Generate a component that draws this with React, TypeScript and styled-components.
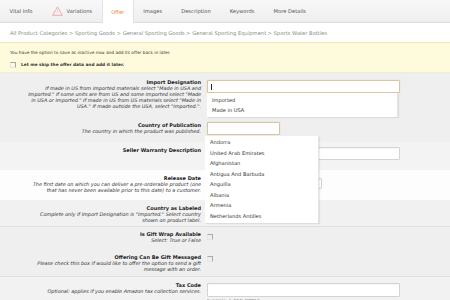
import React from 'react';
import styled, { createGlobalStyle } from 'styled-components';

const GlobalStyle = createGlobalStyle`
  html, body {
    margin: 0;
    padding: 0;
    overflow: hidden;
    background: #efefef;
    font-family: "DejaVu Sans", Verdana, sans-serif;
    color: #333;
  }
`;

const Page = styled.div`
  width: 450px;
  display: flex;
  flex-direction: column;
`;

const TabBar = styled.nav`
  height: 22px;
  display: flex;
  align-items: stretch;
  background: linear-gradient(#f8f8f8, #eeeeee);
  border-bottom: 1px solid #dcdcdc;
`;

const Tab = styled.div<{ $active?: boolean }>`
  display: flex;
  align-items: center;
  gap: 4px;
  padding: 0 8.5px;
  font-size: 5.2px;
  color: ${(p) => (p.$active ? '#e5832f' : '#555')};
  background: ${(p) => (p.$active ? '#fff' : 'transparent')};
  border-left: 1px solid ${(p) => (p.$active ? '#e2e2e2' : 'transparent')};
  border-right: 1px solid ${(p) => (p.$active ? '#e2e2e2' : 'transparent')};
  margin-bottom: ${(p) => (p.$active ? '-1px' : '0')};
  white-space: nowrap;
`;

const Breadcrumb = styled.div`
  background: #fff;
  padding: 7px 10px 6px;
  line-height: 6px;
  font-size: 5.2px;
  color: #8a8a8a;
  white-space: nowrap;
`;

const Notice = styled.div`
  background: #fefbdc;
  border-top: 1px solid #efe6b8;
  border-bottom: 1px solid #f3edcc;
  padding: 7px 10px 4px;
  font-size: 4.3px;
  line-height: 6px;
  color: #333;
`;

const SkipLine = styled.label`
  display: flex;
  align-items: center;
  gap: 5px;
  margin-top: 6px;
  font-weight: bold;
`;

const TinyCheck = styled.span`
  width: 4px;
  height: 4px;
  border-top: 1px solid #a8a8a8;
  border-right: 1px solid #a8a8a8;
  border-left: 1px solid #e6e6e6;
  border-bottom: 1px solid #e6e6e6;
  border-radius: 1px;
  flex: none;
`;

const Form = styled.section`
  display: flex;
  flex-direction: column;
`;

const Row = styled.div<{ $bg: string; $pt: number; $pb: number; $line?: boolean }>`
  display: grid;
  grid-template-columns: 201px 1fr;
  column-gap: 6px;
  align-items: start;
  background: ${(p) => p.$bg};
  padding: ${(p) => `${p.$pt}px 0 ${p.$pb}px`};
  border-top: ${(p) => (p.$line ? '1px solid #e0e0e0' : 'none')};
`;

const LabelCol = styled.div`
  text-align: right;
  padding-left: 12px;
`;

const FieldLabel = styled.div`
  font-size: 5px;
  line-height: 6.5px;
  font-weight: bold;
  color: #222;
  white-space: nowrap;
`;

const FieldHint = styled.div`
  margin-top: 0.5px;
  font-size: 4.9px;
  line-height: 5.5px;
  font-style: italic;
  color: #333;
  white-space: nowrap;
`;

const ControlCol = styled.div<{ $top?: number }>`
  position: relative;
  margin-top: ${(p) => p.$top ?? 0}px;
  display: flex;
  flex-direction: column;
`;

const TextBox = styled.div<{ $w: number; $h?: number; $focus?: boolean }>`
  box-sizing: border-box;
  width: ${(p) => p.$w}px;
  height: ${(p) => p.$h ?? 13}px;
  background: #fff;
  border: 1px solid ${(p) => (p.$focus ? '#d8c6a2' : '#d4d4d4')};
  border-radius: 1px;
  box-shadow: ${(p) => (p.$focus ? '0 0 1px rgba(214, 170, 100, 0.5)' : 'inset 0 1px 1px rgba(0,0,0,0.04)')};
  display: flex;
  align-items: center;
  padding-left: 3px;
`;

const Caret = styled.span`
  width: 0.6px;
  height: 6px;
  background: #222;
`;

const Suggest = styled.ul<{ $w: number; $top: number; $left: number }>`
  position: absolute;
  z-index: 2;
  top: ${(p) => p.$top}px;
  left: ${(p) => p.$left}px;
  width: ${(p) => p.$w}px;
  margin: 0;
  padding: 1.75px 0 1.5px;
  list-style: none;
  background: #fff;
  box-shadow: 1px 1px 1px rgba(0, 0, 0, 0.08);
  border-right: 1px solid #e4e4e4;
`;

const SuggestItem = styled.li`
  padding-left: 5px;
  font-size: 5.1px;
  line-height: 10.5px;
  color: #333;
  white-space: nowrap;
`;

const Check = styled(TinyCheck)<{ $top: number }>`
  margin-top: ${(p) => p.$top}px;
  width: 3.5px;
  height: 4.5px;
`;

const Example = styled.div`
  margin-top: 1px;
  font-size: 4.3px;
  line-height: 5px;
  color: #777;
`;

function WarnIcon() {
  return (
    <svg width="11" height="10" viewBox="0 0 11 10">
      <path d="M5.5 0.8 L10.4 9.3 L0.6 9.3 Z" fill="none" stroke="#ec9a9a" strokeWidth="0.8" strokeLinejoin="round" />
      <path d="M5.5 3.6 L5.5 6.6" stroke="#f1b5b5" strokeWidth="0.6" />
    </svg>
  );
}

function Field({ label, hint }: { label: string; hint?: string[] }) {
  return (
    <LabelCol>
      <FieldLabel>{label}</FieldLabel>
      {hint && hint.map((line, i) => <FieldHint key={i}>{line}</FieldHint>)}
    </LabelCol>
  );
}

const tabs = ['Vital Info', 'Variations', 'Offer', 'Images', 'Description', 'Keywords', 'More Details'];

const countries = [
  'Andorra',
  'United Arab Emirates',
  'Afghanistan',
  'Antigua And Barbuda',
  'Anguilla',
  'Albania',
  'Armenia',
  'Netherlands Antilles',
];

export default function App() {
  return (
    <Page>
      <GlobalStyle />
      <TabBar>
        {tabs.map((t) => (
          <Tab key={t} $active={t === 'Offer'}>
            {t === 'Variations' && <WarnIcon />}
            {t}
          </Tab>
        ))}
      </TabBar>

      <Breadcrumb>
        All Product Categories &gt; Sporting Goods &gt; General Sporting Goods &gt; General Sporting Equipment &gt; Sports Water Bottles
      </Breadcrumb>

      <Notice>
        <div>You have the option to save as inactive now and add its offer back in later.</div>
        <SkipLine>
          <TinyCheck />
          Let me skip the offer data and add it later.
        </SkipLine>
      </Notice>

      <Form>
        <Row $bg="#efefef" $pt={6} $pb={7}>
          <Field
            label="Import Designation"
            hint={[
              'If made in US from imported materials select "Made in USA and',
              'Imported." If some units are from US and some imported select "Made',
              'in USA or Imported." If made in US from US materials select "Made in',
              'USA." If made outside the USA, select "Imported.".',
            ]}
          />
          <ControlCol $top={1}>
            <TextBox $w={193} $focus>
              <Caret />
            </TextBox>
            <Suggest $w={190} $top={13} $left={0}>
              <SuggestItem>Imported</SuggestItem>
              <SuggestItem>Made in USA</SuggestItem>
            </Suggest>
          </ControlCol>
        </Row>

        <Row $bg="#efefef" $pt={5} $pb={7}>
          <Field label="Country of Publication" hint={['The country in which the product was published.']} />
          <ControlCol>
            <TextBox $w={73} $focus />
            <Suggest $w={113} $top={14} $left={-2}>
              {countries.map((c) => (
                <SuggestItem key={c}>{c}</SuggestItem>
              ))}
            </Suggest>
          </ControlCol>
        </Row>

        <Row $bg="#f3f3f3" $pt={5} $pb={10}>
          <Field label="Seller Warranty Description" />
          <ControlCol>
            <TextBox $w={193} />
          </ControlCol>
        </Row>

        <Row $bg="#fdfdfd" $pt={5} $pb={7}>
          <Field
            label="Release Date"
            hint={[
              'The first date on which you can deliver a pre-orderable product (one',
              'that has never been available prior to this date) to a customer.',
            ]}
          />
          <ControlCol $top={3}>
            <TextBox $w={115} $h={11} />
          </ControlCol>
        </Row>

        <Row $bg="#f1f1f1" $pt={5} $pb={2}>
          <Field
            label="Country as Labeled"
            hint={['Complete only if Import Designation is "Imported." Select country', 'shown on product label.']}
          />
          <ControlCol $top={1}>
            <TextBox $w={100} />
          </ControlCol>
        </Row>

        <Row $bg="#efefef" $pt={4.5} $pb={5} $line>
          <Field label="Is Gift Wrap Available" hint={['Select: True or False']} />
          <ControlCol>
            <Check $top={2.5} />
          </ControlCol>
        </Row>

        <Row $bg="#efefef" $pt={5} $pb={4}>
          <Field
            label="Offering Can Be Gift Messaged"
            hint={[
              'Please check this box if would like to offer the option to send a gift',
              'message with an order.',
            ]}
          />
          <ControlCol>
            <Check $top={2} />
          </ControlCol>
        </Row>

        <Row $bg="#f2f2f2" $pt={5} $pb={6} $line>
          <Field label="Tax Code" hint={['Optional: applies if you enable Amazon tax collection services.']} />
          <ControlCol $top={1}>
            <TextBox $w={193} $h={14} />
            <Example>Example: A_GEN_NOTAX</Example>
          </ControlCol>
        </Row>
      </Form>
    </Page>
  );
}
